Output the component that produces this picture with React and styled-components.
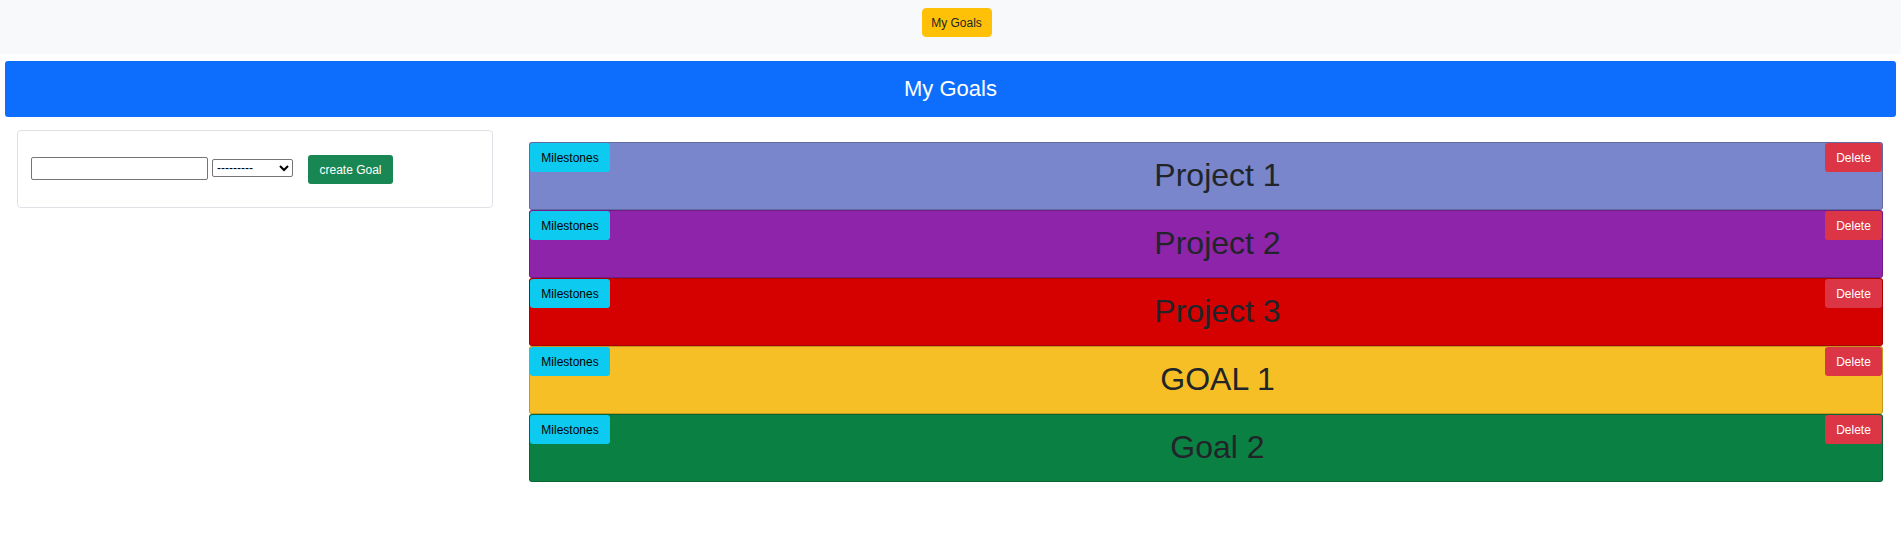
import React, { useState } from 'react'
import styled, { createGlobalStyle } from 'styled-components'

const GlobalStyle = createGlobalStyle`
  body {
    margin: 0;
    background: #fff;
    font-family: "Comic Sans MS", "Liberation Sans", sans-serif;
    color: #212529;
  }
`

const Navbar = styled.nav`
  height: 54px;
  background: #f8f9fa;
  display: flex;
  justify-content: center;
  align-items: flex-start;
  padding-top: 8px;
  box-sizing: border-box;
  padding-left: 12px;
`
const NavButton = styled.button`
  height: 29px;
  width: 70px;
  background: #ffc107;
  border: 1px solid #ffc107;
  border-radius: 4px;
  font-family: "Segoe UI", "Liberation Sans", sans-serif;
  font-size: 12px;
  color: #212529;
  padding: 0;
`
const Banner = styled.h1`
  margin: 7px 5px 0;
  height: 56px;
  background: #0d6efd;
  border-radius: 3px;
  display: flex;
  align-items: center;
  justify-content: center;
  color: #fff;
  font-size: 22px;
  font-weight: normal;
`
const Main = styled.div`
  display: grid;
  grid-template-columns: 476px 1fr;
  gap: 36px;
  padding: 13px 18px 0 17px;
  align-items: start;
`
const Card = styled.form`
  border: 1px solid #dee2e6;
  border-radius: 4px;
  height: 78px;
  box-sizing: border-box;
  display: flex;
  align-items: center;
  padding: 0 0 2px 13px;
`
const TextInput = styled.input`
  width: 177px;
  height: 23px;
  box-sizing: border-box;
  border: 1px solid #767676;
  border-radius: 2px;
`
const Select = styled.select`
  width: 81px;
  height: 18px;
  margin-left: 4px;
  font-size: 12px;
  font-family: "Liberation Sans", sans-serif;
  background: #fff;
  color: #000;
  border: 1px solid #767676;
  border-radius: 2px;
  padding: 0;
`
const CreateButton = styled.button`
  margin-left: 15px;
  width: 85px;
  height: 29px;
  background: #198754;
  border: none;
  border-radius: 3px;
  color: #fff;
  font-family: inherit;
  font-size: 12px;
  margin-top: 3px;
`
const GoalList = styled.div`
  display: flex;
  flex-direction: column;
  padding-top: 12px;
`
const GoalItem = styled.div`
  height: 66px;
  background: ${p => p.$color};
  border: 1px solid rgba(0, 0, 0, 0.2);
  border-radius: 3px;
  display: flex;
  align-items: flex-start;
`
const Title = styled.div`
  flex: 1;
  text-align: center;
  font-size: 32px;
  line-height: 38px;
  margin-top: 13px;
  color: #212529;
`
const SmallButton = styled.button`
  height: 29px;
  border: none;
  border-radius: 3px;
  font-family: inherit;
  font-size: 12px;
  padding: 0;
  width: ${p => p.$width}px;
  background: ${p => p.$bg};
  color: ${p => p.$fg};
`

const goals = [
  { name: 'Project 1', color: '#7986cb' },
  { name: 'Project 2', color: '#8e24aa' },
  { name: 'Project 3', color: '#d50000' },
  { name: 'GOAL 1', color: '#f6bf26' },
  { name: 'Goal 2', color: '#0b8043' },
]

export default function App() {
  const [title, setTitle] = useState('')

  return (
    <>
      <GlobalStyle />
      <Navbar>
        <NavButton>My Goals</NavButton>
      </Navbar>
      <Banner>My Goals</Banner>
      <Main>
        <Card onSubmit={e => e.preventDefault()}>
          <TextInput type='text' value={title} onChange={e => setTitle(e.target.value)} />
          <Select>
            <option>---------</option>
          </Select>
          <CreateButton>create Goal</CreateButton>
        </Card>
        <GoalList>
          {goals.map(goal => (
            <GoalItem key={goal.name} $color={goal.color}>
              <SmallButton $width={80} $bg='#0dcaf0' $fg='#000'>Milestones</SmallButton>
              <Title>{goal.name}</Title>
              <SmallButton $width={57} $bg='#dc3545' $fg='#fff'>Delete</SmallButton>
            </GoalItem>
          ))}
        </GoalList>
      </Main>
    </>
  )
}
